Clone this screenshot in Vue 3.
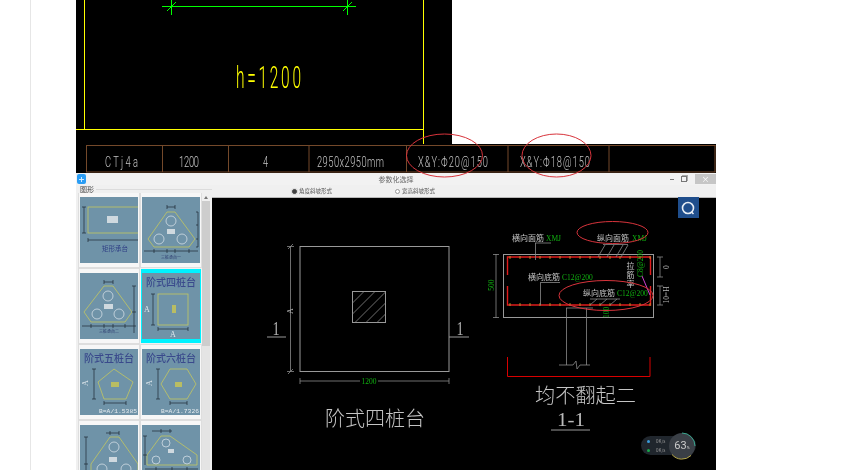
<script setup>
const tableCols = [86.5, 162.5, 228.5, 309, 406.5, 508, 609, 715]
const tableScale = 0.62
const tableTexts = [
  { t: 'CTj4a', x: 105, w: 33 },
  { t: '1200', x: 179, w: 20 },
  { t: '4', x: 263, w: 6 },
  { t: '2950x2950mm', x: 317, w: 67 },
  { t: 'X&Y:Φ20@150', x: 418, w: 70 },
  { t: 'X&Y:Φ18@150', x: 520, w: 70 }
]

const tri = '25,15 33,15 53,42 47,50 12,50 6,42'
const thumbs = [
  { rect: [8, 10, 60, 26], box: [27, 19, 11, 7], dims: ['M4 10V36M2 10H6M2 36H6', 'M8 43H58M8 41V45'], big: '矩形承台', bigX: 35, bigY: 54, bigSize: 6.5 },
  { poly: tri, circles: [[29, 24, 5], [17, 42, 5], [40, 42, 5]], box: [25, 32, 8, 5], dims: ['M25 10H33M25 8V12M33 8V12', 'M56 15V50M54 15H56M54 28H56M54 42H56M54 50H56', 'M2 54H56M12 52V56M25 52V56M33 52V56M47 52V56'], small: '三桩承台一', smallY: 62 },
  { poly: '24,13 33,13 52,39 45,49 11,49 4,39', circles: [[28, 23, 5], [17, 41, 5], [39, 41, 5]], box: [24, 31, 9, 5], dims: ['M24 9H33M24 7V11M33 7V11', 'M54 13V60M52 13H56M52 39H56', 'M2 53H56M11 51V55M24 51V55M33 51V55M45 51V55'], small: '三桩承台二', smallY: 60 },
  { rect: [16, 21, 30, 31], box: [30, 32, 4, 8], boxYellow: true, dims: ['M11 21V52M9 21H13M9 52H13', 'M16 56H46M16 54V58M46 54V58'], title: '阶式四桩台', letters: [[5, 39, 'A'], [31, 64, 'A']] },
  { poly: '34,20 53,33 46,50 24,50 18,33', box: [31, 33, 8, 5], boxYellow: true, dims: ['M14 20V50M12 20H16M12 50H16', 'M24 54H46M24 52V56M46 52V56'], title: '阶式五桩台', side: [8, 34], caption: 'B=A/1.5385' },
  { poly: '19,35 28,20 45,20 54,35 45,50 28,50', box: [33, 33, 7, 5], boxYellow: true, dims: ['M16 20V50M14 20H18M14 50H18', 'M28 54H45M28 52V56M45 52V56'], title: '阶式六桩台', side: [10, 34], caption: 'B=A/1.7326' },
  { poly: '30,12 39,12 58,39 58,70 11,70 11,39', circles: [[34, 22, 5], [22, 44, 5], [46, 44, 5]], box: [29, 32, 8, 5], dims: ['M26 8H39M30 6V10M39 6V10', 'M6 12V66M4 12H8M4 39H8'] },
  { poly: '19,11 28,11 55,30 55,40 5,40 5,30', circles: [[24, 18, 4], [14, 35, 4], [45, 35, 4]], box: [26, 24, 6, 4], dims: ['M10 6H30M19 4V8M28 4V8', 'M3 11V40M1 11H5M1 30H5', 'M3 44H56M14 42V46M30 42V46M45 42V46'] }
]

const dots = Array.from({ length: 15 }, (_, i) => 510 + i * 10)
</script>

<template>
  <div class="page">
    <div class="article">
      <svg class="pic top-pic" viewBox="76 0 376 144" width="376" height="144">
        <rect x="76" y="0" width="376" height="144" fill="#000" />
        <path d="M84.5 0V129M76 129.5H423.5M423.5 0V144" class="yellow" />
        <path d="M162 6.5H356M171.5 0V15M347.5 0V15M167 11L176 2M343 11L352 2" class="green" />
        <text transform="translate(236 88) scale(.5 1)" textLength="130" class="cad" fill="#ff0" font-size="31">h=1200</text>
      </svg>

      <div class="shot">
        <svg class="pic" viewBox="76 144 640 29" width="640" height="29">
          <rect x="76" y="144" width="640" height="29" fill="#000" />
          <path d="M86 145.5H715.5M86 172H715.5" class="brown" />
          <path v-for="x in tableCols" :key="x" :d="`M${x} 145V172`" class="brown" />
          <text v-for="c in tableTexts" :key="c.t" :transform="`translate(${c.x} 167) scale(${tableScale} 1)`" :textLength="c.w / tableScale" class="cad" fill="#c4c4c4" font-size="15">{{ c.t }}</text>
        </svg>

        <div class="window">
          <div class="titlebar">
            <span class="app-icon"><i></i></span>
            <span class="win-title">参数化选择</span>
            <div class="win-btns">
              <span class="btn-min"></span>
              <span class="btn-max"></span>
              <span class="btn-close">×</span>
            </div>
          </div>

          <div class="win-body">
            <aside class="side">
              <div class="side-head"><span>图形</span><i></i></div>
              <div class="side-body">
                <div class="thumb-grid">
                  <div v-for="(th, i) in thumbs" :key="i" class="cell" :class="{ active: i === 3 }">
                    <svg class="thumb" viewBox="0 0 58 66" width="58" height="66">
                      <rect width="58" height="66" fill="#6f93a8" />
                      <rect v-if="th.rect" :x="th.rect[0]" :y="th.rect[1]" :width="th.rect[2]" :height="th.rect[3]" class="shape" />
                      <polygon v-if="th.poly" :points="th.poly" class="shape" />
                      <circle v-for="(c, j) in th.circles" :key="j" :cx="c[0]" :cy="c[1]" :r="c[2]" class="hole" />
                      <rect :x="th.box[0]" :y="th.box[1]" :width="th.box[2]" :height="th.box[3]" :fill="th.boxYellow ? '#b9bd63' : '#cfd9df'" />
                      <path v-for="(d, j) in th.dims" :key="j" :d="d" class="dim" />
                      <text v-if="th.title" x="29" y="13" text-anchor="middle" class="th-title" textLength="50" lengthAdjust="spacingAndGlyphs">{{ th.title }}</text>
                      <text v-if="th.big" :x="th.bigX" :y="th.bigY" text-anchor="middle" class="th-big" :font-size="th.bigSize">{{ th.big }}</text>
                      <text v-if="th.small" x="29" :y="th.smallY" text-anchor="middle" class="th-small">{{ th.small }}</text>
                      <text v-for="(l, j) in th.letters" :key="j" :x="l[0]" :y="l[1]" text-anchor="middle" class="th-letter">{{ l[2] }}</text>
                      <text v-if="th.side" :transform="`translate(${th.side[0]} ${th.side[1]}) rotate(-90)`" text-anchor="middle" class="th-letter">A</text>
                      <text v-if="th.caption" x="19" y="63.5" class="th-cap" textLength="38" lengthAdjust="spacingAndGlyphs">{{ th.caption }}</text>
                    </svg>
                  </div>
                </div>
                <div class="scrollbar">
                  <span class="arrow"></span>
                  <span class="scroll-thumb"></span>
                </div>
              </div>
            </aside>

            <div class="main">
              <div class="toolbar">
                <label class="radio on"><i></i>角度斜坡形式</label>
                <label class="radio"><i></i>宽高斜坡形式</label>
              </div>

              <div class="canvas">
                <svg class="draw" viewBox="212 198 504 272" width="504" height="272">
                  <rect x="212" y="198" width="504" height="272" fill="#000" />

                  <!-- plan -->
                  <rect x="300" y="246.5" width="149" height="125" class="line" />
                  <rect x="352.5" y="291.5" width="33" height="31" class="line" />
                  <path d="M352.5 303L364 291.5M352.5 314L375 291.5M355 322.5L385.5 292M366 322.5L385.5 303M377 322.5L385.5 314" class="thin" />
                  <path d="M290.5 246V371M287 246.5H294M287 371.5H294M288 249L293 244M288 374L293 369" class="thin" />
                  <text transform="translate(293 311) rotate(-90)" text-anchor="middle" class="small-white">A</text>
                  <path d="M300 381H360M378 381H449M300 378V384M449 378V384" class="thin" />
                  <text x="369" y="384" text-anchor="middle" class="serif-green">1200</text>
                  <path d="M267 337H286M449 337H469" class="line" />
                  <text transform="translate(276 335) scale(.75 1)" text-anchor="middle" class="big-num">1</text>
                  <text transform="translate(460 335) scale(.75 1)" text-anchor="middle" class="big-num">1</text>
                  <text x="325" y="426" textLength="100" lengthAdjust="spacingAndGlyphs" class="cjk-big">阶式四桩台</text>

                  <!-- section -->
                  <rect x="503.5" y="254.5" width="150" height="63" class="line" />
                  <path d="M507.5 275V257H650.5V275M507.5 286V305H650.5V286" class="rebar" />
                  <path v-for="x in dots" :key="'t' + x" :d="`M${x} 256V259`" class="dot" />
                  <path v-for="x in dots" :key="'b' + x" :d="`M${x} 303V306`" class="dot" />
                  <path d="M496 254V318M493 254.5H499M493 317.5H499" class="thin" />
                  <text transform="translate(494 285) rotate(-90)" text-anchor="middle" class="serif-green">500</text>
                  <path d="M660 257V277M657 257H663M657 277H663M660 286V305M657 286H663M657 305H663" class="thin" />
                  <text transform="translate(669 267) rotate(-90)" text-anchor="middle" class="small-white">0</text>
                  <text transform="translate(669 295) rotate(-90)" text-anchor="middle" class="small-white">10=H</text>

                  <text x="512" y="241" class="cjk-label">横向面筋</text>
                  <text x="546" y="241" class="serif-green">XMJ</text>
                  <path d="M535 243H551M535.5 243V260" class="thin" />
                  <text x="597" y="241" class="cjk-label">纵向面筋</text>
                  <text x="632" y="241" class="serif-green">XMJ</text>
                  <path d="M603 244.5H628M605 245L598 257M614 245L607 257M623 245L616 257M628 245L621 257" class="thin" />
                  <text x="528" y="280" class="cjk-label">横向底筋</text>
                  <text x="562" y="280" class="serif-green">C12@200</text>
                  <path d="M541 282.5H560M540.5 282V305" class="thin" />
                  <text x="583" y="296" class="cjk-label">纵向底筋</text>
                  <text x="617" y="296" class="serif-green">C12@200</text>
                  <path d="M590 299H620M597 299L590 305M607 299L600 305M617 299L610 305" class="thin" />
                  <text x="630.5" y="262" class="cjk-label vert">拉筋率</text>
                  <text transform="translate(643 277) rotate(-90)" class="serif-green">C8@200</text>
                  <path d="M642 276L650 295" stroke="#d040d0" fill="none" />
                  <text transform="translate(609 318) rotate(-90)" class="serif-green">100</text>

                  <path d="M566.5 308V365M586.5 308V365M566 308H593M559 365H573L576 361L577 369L580 365H590" class="thin" />
                  <path d="M507.5 357V376.5H650V357" class="bracket" />
                  <text x="535" y="403" textLength="101" lengthAdjust="spacingAndGlyphs" class="cjk-big">均不翻起二</text>
                  <text x="557" y="426" textLength="28" lengthAdjust="spacingAndGlyphs" class="num-big">1-1</text>
                  <path d="M551 430H590" class="line" />
                </svg>

                <span class="search-btn">
                  <svg viewBox="0 0 20 20" width="20" height="20">
                    <circle cx="10" cy="10" r="5.5" fill="none" stroke="#e8eef5" stroke-width="1.6" />
                    <path d="M13.5 14L15.5 16" stroke="#e8eef5" stroke-width="1.6" />
                  </svg>
                </span>

                <div class="net-widget">
                  <div class="net-rows">
                    <div><i class="blue"></i>0K/s</div>
                    <div><i class="lime"></i>0K/s</div>
                  </div>
                  <div class="net-ring">
                    <svg viewBox="0 0 28 28" width="28" height="28">
                      <circle cx="14" cy="14" r="13" fill="#3a3f46" />
                      <path d="M14 1A13 13 0 0 1 27 14" fill="none" stroke="#3aa68f" stroke-width="1" />
                      <path d="M23 23.5A13 13 0 0 1 4 22.5" fill="none" stroke="#b8a94a" stroke-width="1" />
                    </svg>
                    <span>63<small>%</small></span>
                  </div>
                </div>
              </div>
            </div>
          </div>
        </div>
      </div>
    </div>

    <svg class="marks" viewBox="0 0 858 470" width="858" height="470">
      <ellipse cx="444.5" cy="155.5" rx="38" ry="21.5" />
      <ellipse cx="556.5" cy="155.5" rx="34.5" ry="21.5" />
      <ellipse cx="612.5" cy="232.5" rx="35.5" ry="11" />
      <ellipse cx="606" cy="295.5" rx="47" ry="15" />
    </svg>
  </div>
</template>

<style>
html, body {
  margin: 0;
  background: #fff;
}
</style>

<style scoped>
.page {
  position: relative;
  width: 858px;
  height: 470px;
  overflow: hidden;
  background: #fff;
  font-family: "Noto Sans CJK SC", "Liberation Sans", sans-serif;
}
.article {
  margin-left: 30px;
  height: 470px;
  padding-left: 45px;
  border-left: 1px solid #e6e6e6;
}
.pic {
  display: block;
  filter: blur(0.3px);
}
.draw {
  display: block;
}
.shot {
  width: 640px;
}
.marks {
  position: absolute;
  left: 0;
  top: 0;
  pointer-events: none;
}
.marks ellipse {
  fill: none;
  stroke: #d8343c;
  stroke-width: 1;
}

.yellow { fill: none; stroke: #ff0; stroke-width: 1; }
.green { fill: none; stroke: #0f0; stroke-width: 1; }
.brown { fill: none; stroke: #74492a; stroke-width: 1; }
.cad {
  font-family: Roboto, "Liberation Sans", sans-serif;
  font-weight: 300;
}

.window {
  height: 297px;
  background: #f0f0f0;
  filter: blur(0.35px);
}
.titlebar {
  position: relative;
  height: 12px;
  display: flex;
  align-items: center;
  justify-content: center;
  background: #f2f2f2;
}
.app-icon {
  position: absolute;
  left: 1px;
  top: 1px;
  width: 9px;
  height: 10px;
  border-radius: 2px;
  background: #2a9df4;
  display: flex;
  align-items: center;
  justify-content: center;
}
.app-icon i {
  width: 5px;
  height: 5px;
  background: linear-gradient(#cfe9ff, #cfe9ff) center / 100% 1px no-repeat, linear-gradient(#cfe9ff, #cfe9ff) center / 1px 100% no-repeat;
}
.win-title {
  font-size: 7px;
  color: #666;
}
.win-btns {
  position: absolute;
  right: 0;
  top: 1px;
  display: flex;
  align-items: center;
  gap: 7px;
}
.btn-min {
  width: 4px;
  height: 1px;
  background: #777;
}
.btn-max {
  width: 4px;
  height: 4px;
  border: 1px solid #777;
  box-shadow: 1px -1px 0 #aaa;
  margin-right: 1px;
}
.btn-close {
  width: 21px;
  height: 10px;
  background: #c6c6c6;
  color: #fff;
  font-size: 8px;
  line-height: 10px;
  text-align: center;
}

.win-body {
  display: flex;
  height: 285px;
}
.side {
  width: 136px;
  flex: none;
  overflow: hidden;
}
.side-head {
  height: 8px;
  display: flex;
  align-items: center;
  gap: 2px;
  padding-left: 4px;
  font-size: 7px;
  line-height: 8px;
  color: #444;
}
.side-head i {
  flex: 1;
  height: 1px;
  background: #dcdcdc;
}
.side-body {
  display: flex;
  height: 277px;
  overflow: hidden;
}
.thumb-grid {
  display: grid;
  grid-template-columns: 60px 60px;
  grid-auto-rows: 74px;
  gap: 2px;
  margin-left: 3px;
  width: 122px;
  flex: none;
}
.cell {
  padding: 4px 1px;
  background: #f7f7f7;
  box-shadow: 0 0 0 1px #dedede;
}
.cell.active {
  background: #00f2ff;
  box-shadow: none;
}
.thumb {
  display: block;
}
.shape { fill: none; stroke: #c3c75f; stroke-width: 0.8; }
.hole { fill: none; stroke: #dfe7ec; stroke-width: 0.7; }
.dim { fill: none; stroke: #1c2a34; stroke-width: 0.7; }
.th-title {
  font-size: 10px;
  font-weight: 500;
  fill: #3a4a8c;
  font-family: "Noto Sans CJK SC", sans-serif;
}
.th-big {
  fill: #2f3f85;
  font-family: "Noto Sans CJK SC", sans-serif;
}
.th-small {
  font-size: 4px;
  fill: #2b3a6e;
  font-family: "Noto Sans CJK SC", sans-serif;
}
.th-letter {
  font-size: 8px;
  fill: #dfe7ec;
  font-family: "Liberation Serif", serif;
}
.th-cap {
  font-size: 6px;
  fill: #e4ebef;
  font-family: "Liberation Mono", monospace;
}
.scrollbar {
  width: 8px;
  margin-left: 1px;
  display: flex;
  flex-direction: column;
  background: #e4e4e4;
}
.arrow {
  height: 8px;
  position: relative;
  background: #f0f0f0;
}
.arrow::after {
  content: "";
  position: absolute;
  left: 2px;
  top: 3px;
  border-left: 2px solid transparent;
  border-right: 2px solid transparent;
  border-bottom: 3px solid #777;
}
.scroll-thumb {
  height: 145px;
  background: #cdcdcd;
}

.main {
  flex: 1;
  display: flex;
  flex-direction: column;
  min-width: 0;
}
.toolbar {
  height: 12px;
  border-bottom: 1px solid #b8b8b8;
  display: flex;
  align-items: center;
  padding-left: 80px;
  gap: 63px;
  background: #f0f0f0;
}
.radio {
  display: flex;
  align-items: center;
  gap: 2px;
  font-size: 5.5px;
  line-height: 7px;
  padding-top: 1px;
  color: #555;
}
.radio i {
  width: 5px;
  height: 5px;
  border-radius: 50%;
  background: #fff;
  border: 1px solid #999;
  box-sizing: border-box;
}
.radio.on i {
  background: #444;
  box-shadow: 0 0 0 1px #ddd;
  border-color: #444;
}
.canvas {
  position: relative;
  height: 272px;
  background: #000;
}
.line { fill: none; stroke: #999; stroke-width: 1; }
.thin { fill: none; stroke: #8a8a8a; stroke-width: 0.8; }
.rebar { fill: none; stroke: #e01b1b; stroke-width: 1.4; }
.dot { fill: none; stroke: #c8b030; stroke-width: 0.8; }
.bracket { fill: none; stroke: #d80000; stroke-width: 1; }
.serif-green {
  font-family: "Liberation Serif", serif;
  font-size: 7.5px;
  fill: #10b010;
}
.small-white {
  font-family: "Liberation Serif", serif;
  font-size: 7.5px;
  fill: #b5b5b5;
}
.big-num {
  font-family: "Liberation Serif", serif;
  font-size: 19px;
  fill: #b0b0b0;
}
.num-big {
  font-family: "Liberation Serif", serif;
  font-size: 18px;
  fill: #bbb;
}
.cjk-big {
  font-family: "Noto Sans CJK SC", sans-serif;
  font-size: 20px;
  font-weight: 300;
  fill: #c4c4c4;
}
.cjk-label {
  font-family: "Noto Sans CJK SC", sans-serif;
  font-size: 8px;
  fill: #c4c4c4;
}
.vert {
  writing-mode: vertical-rl;
  letter-spacing: 1px;
}
.search-btn {
  position: absolute;
  left: 465.5px;
  top: -1px;
  width: 21px;
  height: 21px;
  background: #1f4e8c;
  display: flex;
  align-items: center;
  justify-content: center;
}
.net-widget {
  position: absolute;
  left: 429px;
  top: 238px;
  width: 55px;
  height: 19px;
  border-radius: 10px;
  background: #20262d;
  color: #999;
  font-size: 4.5px;
}
.net-rows {
  padding: 2px 0 0 6px;
  display: flex;
  flex-direction: column;
  gap: 2px;
  line-height: 7px;
}
.net-rows div {
  display: flex;
  align-items: center;
  gap: 6px;
}
.net-rows i {
  width: 3px;
  height: 3px;
  border-radius: 50%;
}
.net-rows .blue { background: #3a9ad9; }
.net-rows .lime { background: #18a84a; }
.net-ring {
  position: absolute;
  right: 0;
  top: -4.5px;
  width: 28px;
  height: 28px;
}
.net-ring svg {
  display: block;
}
.net-ring span {
  position: absolute;
  inset: 0;
  display: flex;
  align-items: center;
  justify-content: center;
  color: #ccc;
  font-size: 11px;
  font-family: Roboto, sans-serif;
}
.net-ring small {
  font-size: 4px;
  margin-top: 4px;
}
</style>
